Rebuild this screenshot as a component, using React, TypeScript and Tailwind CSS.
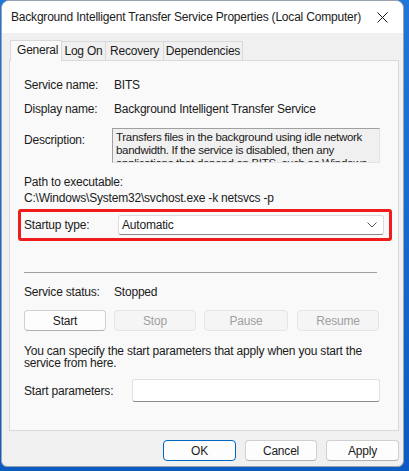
import React from "react";

function Row({ label, value }: { label: string; value: string }) {
  return (
    <div className="flex h-[24px] items-center">
      <span className="w-[90px]">{label}</span>
      <span>{value}</span>
    </div>
  );
}

function Btn({ label, disabled, w, primary }: { label: string; disabled?: boolean; w: string; primary?: boolean }) {
  const base = "h-[21px] flex items-center justify-center rounded-[4px] border";
  const look = disabled
    ? "bg-[#f5f5f5] border-[#e5e5e5] text-[#a0a0a0]"
    : primary
    ? "bg-[#fdfdfd] border-[#0067c0] text-[#1b1b1b]"
    : "bg-[#fdfdfd] border-[#d0d0d0] border-b-[#b0b0b0] text-[#1b1b1b]";
  return <div className={`${base} ${look} ${w}`}>{label}</div>;
}

export default function App() {
  return (
    <div className="w-[409px] h-[471px] bg-gradient-to-b from-[#1f78d8] to-[#0b5bc2] overflow-hidden font-['Liberation_Sans',Arial,sans-serif] text-[12px] tracking-[-0.2px] text-[#1b1b1b] leading-none whitespace-nowrap">
      <div className="ml-[1px] w-[403px] h-[467px] bg-[#f0f0f0] rounded-t-[8px] rounded-b-[6px] overflow-hidden border border-[#9aa3ad] flex flex-col">
        {/* title bar */}
        <div className="h-[32px] bg-white flex items-center pl-[9px] pr-[8px] shrink-0">
          <span className="flex-1 text-[12px]">Background Intelligent Transfer Service Properties (Local Computer)</span>
          <svg width="11" height="11" viewBox="0 0 11 11" className="mr-[7px]">
            <path d="M0.5 0.5 L10.5 10.5 M10.5 0.5 L0.5 10.5" stroke="#1b1b1b" strokeWidth="1" />
          </svg>
        </div>

        {/* tabs */}
        <div className="flex items-end pl-[8px] h-[27px] shrink-0">
          <div className="h-[21px] w-[52px] bg-[#f9f9f9] border border-b-0 border-[#d9d9d9] flex items-center pl-[6px] relative z-10 -mb-px pb-[2px]">General</div>
          <div className="h-[19px] w-[44px] border border-l-0 border-b-0 border-[#d9d9d9] flex items-center justify-center">Log On</div>
          <div className="h-[19px] w-[58px] border border-l-0 border-b-0 border-[#d9d9d9] flex items-center justify-center">Recovery</div>
          <div className="h-[19px] w-[79px] border border-l-0 border-b-0 border-[#d9d9d9] flex items-center justify-center">Dependencies</div>
        </div>

        {/* panel */}
        <div className="ml-[7px] w-[390px] h-[371px] bg-[#f9f9f9] border border-[#d9d9d9] pl-[14px] pr-[18px] pt-[12px] shrink-0">
          <Row label="Service name:" value="BITS" />
          <Row label="Display name:" value="Background Intelligent Transfer Service" />
          <div className="flex mt-[7px]">
            <span className="w-[88px] pt-[6px]">Description:</span>
            <div className="w-[268px] h-[35px] bg-[#f0f0f0] border border-[#a0a0a0] border-r-[#e3e3e3] border-b-[#e3e3e3] overflow-hidden pl-[3px] pr-[2px] pt-[2px] leading-[13px] whitespace-normal text-[11.5px] tracking-[-0.3px]">
              Transfers files in the background using idle network bandwidth. If the service is disabled, then any applications that depend on BITS, such as Windows Update or MSN Explorer, will be unable to automatically download programs and other information.
            </div>
          </div>
          <div className="mt-[11px] h-[16px] flex items-center">Path to executable:</div>
          <div className="h-[16px] flex items-center">C:\Windows\System32\svchost.exe -k netsvcs -p</div>
          <div className="-ml-[6px] mt-[3px] w-[374px] h-[32px] border-[3px] border-[#f01c1c] rounded-[3px] flex items-center pl-[3px]">
            <span className="w-[94px]">Startup type:</span>
            <div className="w-[266px] h-[20px] bg-white border border-[#dcdcdc] border-b-[#8a8a8a] rounded-[3px] flex items-center pl-[3px] pr-[6px]">
              <span className="flex-1">Automatic</span>
              <svg width="10" height="6" viewBox="0 0 10 6">
                <path d="M0.5 0.5 L5 5 L9.5 0.5" fill="none" stroke="#555" strokeWidth="1" />
              </svg>
            </div>
          </div>
          <div className="mt-[31px] w-[353px] h-px bg-[#a0a0a0]" />
          <div className="mt-[12px] flex h-[14px] items-center">
            <span className="w-[90px]">Service status:</span>
            <span>Stopped</span>
          </div>
          <div className="mt-[11px] flex">
            <Btn label="Start" w="w-[82px]" />
            <div className="w-[8px]" />
            <Btn label="Stop" w="w-[82px]" disabled />
            <div className="w-[8px]" />
            <Btn label="Pause" w="w-[84px]" disabled />
            <div className="w-[9px]" />
            <Btn label="Resume" w="w-[82px]" disabled />
          </div>
          <div className="mt-[14px] leading-[12px] w-[360px] whitespace-normal">
            You can specify the start parameters that apply when you start the service from here.
          </div>
          <div className="mt-[10px] flex items-center">
            <span className="w-[109px]">Start parameters:</span>
            <div className="w-[249px] h-[23px] bg-white border border-[#e0e0e0] border-b-[#8a8a8a] rounded-[3px]" />
          </div>
        </div>

        {/* bottom buttons */}
        <div className="flex justify-end pr-[4px] mt-[9px] gap-[9px]">
          <Btn label="OK" w="w-[73px]" primary />
          <Btn label="Cancel" w="w-[72px]" />
          <Btn label="Apply" w="w-[73px]" />
        </div>
      </div>
    </div>
  );
}
